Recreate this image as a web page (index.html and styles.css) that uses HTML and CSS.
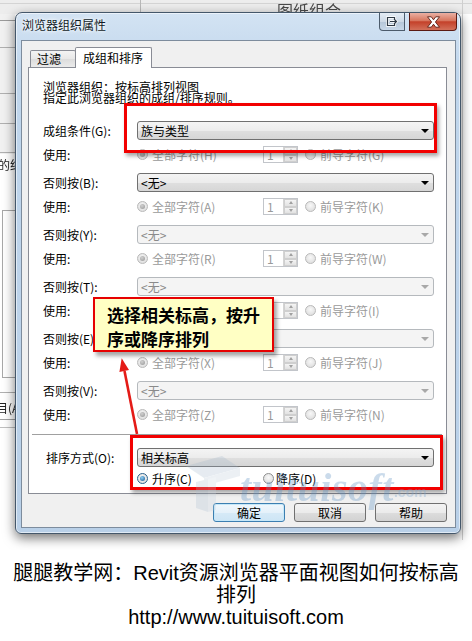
FILE: index.html
```html
<!DOCTYPE html>
<html lang="zh-CN">

<head>
    <meta charset="UTF-8" />
    <meta name="viewport" content="width=device-width, initial-scale=1" />
    <title>浏览器组织属性</title>
    <link rel="stylesheet" href="styles.css">
</head>

<body>

    <div class="scene">
        <!-- blurred Revit window behind the dialog -->
        <svg class="backdrop" width="472" height="550" viewBox="0 0 472 550">
            <rect x="0" y="0" width="472" height="14" fill="#ededed" />
            <line x1="0" y1="3.5" x2="472" y2="3.5" stroke="#d4d4d4" />
            <line x1="140.5" y1="0" x2="140.5" y2="14" stroke="#b8b8b8" />
            <text x="277" y="17" font-size="16" fill="#4a4a4a" font-family="Noto Sans CJK SC">图纸组合</text>
            <line x1="462.5" y1="0" x2="462.5" y2="540" stroke="#cfcfcf" />
            <rect x="0" y="14" width="15" height="140" fill="#f1f1f1" />
            <line x1="0" y1="20.5" x2="15" y2="20.5" stroke="#9a9a9a" />
            <line x1="0" y1="47.5" x2="15" y2="47.5" stroke="#b0b0b0" />
            <line x1="0" y1="93.5" x2="15" y2="93.5" stroke="#b0b0b0" />
            <line x1="0" y1="123.5" x2="15" y2="123.5" stroke="#b0b0b0" />
            <line x1="0" y1="152.5" x2="15" y2="152.5" stroke="#b0b0b0" />
            <text x="-2" y="170" font-size="12" fill="#222" font-family="Noto Sans CJK SC">的约</text>
            <rect x="2.5" y="210.5" width="20" height="167" fill="none" stroke="#a8a8a8" />
            <line x1="0" y1="392.5" x2="15" y2="392.5" stroke="#b0b0b0" />
            <text x="-4" y="413" font-size="12" fill="#222" font-family="Noto Sans CJK SC">目(A</text>
            <line x1="0" y1="419.5" x2="15" y2="419.5" stroke="#a0a0a0" />
            <line x1="0" y1="427.5" x2="15" y2="427.5" stroke="#c0c0c0" />
        </svg>

        <div class="dialog">
            <div class="titlebar">
                <span class="title">浏览器组织属性</span>
                <div class="caption-btns">
                    <span class="cbtn cbtn-dock">
                        <svg width="13" height="11" viewBox="0 0 13 11">
                            <path d="M8.5 3.5V1.5h-7v8h7V7.5" fill="none" stroke="#fff" stroke-width="2.6" />
                            <path d="M4 5.5h6M8 3l2.5 2.5L8 8" fill="none" stroke="#fff" stroke-width="2.6" />
                            <path d="M8.5 3.5V1.5h-7v8h7V7.5" fill="none" stroke="#2f3a46" stroke-width="1.2" />
                            <path d="M4 5.5h6M8 3l2.5 2.5L8 8" fill="none" stroke="#2f3a46" stroke-width="1.2" />
                        </svg>
                    </span>
                    <span class="cbtn cbtn-close">
                        <svg width="15" height="12" viewBox="0 0 15 12">
                            <path d="M1.5 0.8h3.8L7.5 3.8l2.2-3h3.8L9.4 6l4.1 5.2H9.7L7.5 8.2l-2.2 3H1.5L5.6 6z"
                                fill="#fff" stroke="#5b1c12" stroke-width="0.9" />
                        </svg>
                    </span>
                </div>
            </div>

            <div class="client">
                <div class="tabs">
                    <span class="tab">过滤</span>
                    <span class="tab active">成组和排序</span>
                </div>

                <div class="panel">
                    <p class="desc">浏览器组织：按标高排列视图<br>指定此浏览器组织的成组/排序规则。</p>

                    <div class="field"><span class="lbl">成组条件(G):</span><div class="select">族与类型</div></div>
                    <div class="use">
                        <span class="lbl">使用:</span>
                        <span class="opt opt-all"><i class="radio on"></i>全部字符(H)</span>
                        <span class="spin"><span class="spin-val">1</span><span class="spin-btns"><b class="up"></b><b class="down"></b></span></span>
                        <span class="opt opt-lead"><i class="radio"></i>前导字符(G)</span>
                    </div>

                    <div class="field"><span class="lbl">否则按(B):</span><div class="select">&lt;无&gt;</div></div>
                    <div class="use">
                        <span class="lbl">使用:</span>
                        <span class="opt opt-all"><i class="radio on"></i>全部字符(A)</span>
                        <span class="spin"><span class="spin-val">1</span><span class="spin-btns"><b class="up"></b><b class="down"></b></span></span>
                        <span class="opt opt-lead"><i class="radio"></i>前导字符(K)</span>
                    </div>

                    <div class="field"><span class="lbl">否则按(Y):</span><div class="select off">&lt;无&gt;</div></div>
                    <div class="use">
                        <span class="lbl">使用:</span>
                        <span class="opt opt-all"><i class="radio on"></i>全部字符(R)</span>
                        <span class="spin"><span class="spin-val">1</span><span class="spin-btns"><b class="up"></b><b class="down"></b></span></span>
                        <span class="opt opt-lead"><i class="radio"></i>前导字符(W)</span>
                    </div>

                    <div class="field"><span class="lbl">否则按(T):</span><div class="select off">&lt;无&gt;</div></div>
                    <div class="use">
                        <span class="lbl">使用:</span>
                        <span class="opt opt-all"><i class="radio on"></i>全部字符(S)</span>
                        <span class="spin"><span class="spin-val">1</span><span class="spin-btns"><b class="up"></b><b class="down"></b></span></span>
                        <span class="opt opt-lead"><i class="radio"></i>前导字符(I)</span>
                    </div>

                    <div class="field"><span class="lbl">否则按(E):</span><div class="select off">&lt;无&gt;</div></div>
                    <div class="use">
                        <span class="lbl">使用:</span>
                        <span class="opt opt-all"><i class="radio on"></i>全部字符(X)</span>
                        <span class="spin"><span class="spin-val">1</span><span class="spin-btns"><b class="up"></b><b class="down"></b></span></span>
                        <span class="opt opt-lead"><i class="radio"></i>前导字符(J)</span>
                    </div>

                    <div class="field"><span class="lbl">否则按(V):</span><div class="select off">&lt;无&gt;</div></div>
                    <div class="use">
                        <span class="lbl">使用:</span>
                        <span class="opt opt-all"><i class="radio on"></i>全部字符(Z)</span>
                        <span class="spin"><span class="spin-val">1</span><span class="spin-btns"><b class="up"></b><b class="down"></b></span></span>
                        <span class="opt opt-lead"><i class="radio"></i>前导字符(N)</span>
                    </div>

                    <hr class="sep">

                    <div class="field sort"><span class="lbl">排序方式(O):</span><div class="select">相关标高</div></div>
                    <div class="order">
                        <span class="opt"><i class="radio on"></i>升序(C)</span>
                        <span class="opt"><i class="radio"></i>降序(D)</span>
                    </div>

                    <!-- annotations drawn over the dialog -->
                    <div class="mark mark-group"></div>
                    <div class="mark mark-sort"></div>
                    <svg class="arrow" width="160" height="400" viewBox="0 0 160 400">
                        <line x1="108" y1="366" x2="95.5" y2="303" stroke="#e41b17" stroke-width="2.6" />
                        <polygon points="92.7,290.3 100,302 90.4,304" fill="#e41b17" />
                    </svg>
                    <div class="callout">选择相关标高，按升<br>序或降序排列</div>
                </div>

                <div class="buttons">
                    <button class="btn default">确定</button>
                    <button class="btn">取消</button>
                    <button class="btn">帮助</button>
                </div>
            </div>
        </div>

        <!-- site watermark -->
        <div class="watermark">
            <svg class="wm-logo" width="62" height="62" viewBox="0 0 62 62">
                <polygon points="4,14 40,4 58,16 22,26" fill="#9fb4c8" />
                <polygon points="22,26 58,16 58,24 22,34" fill="#b6c6d6" />
                <polygon points="14,30 26,27 26,60 14,56" fill="#a8bccf" />
                <polygon points="26,27 34,25 34,58 26,60" fill="#c2d0de" />
            </svg>
            <span class="wm-text">tuituisoft</span><span class="wm-com">.com</span>
        </div>
    </div>

    <div class="caption">
        <p>腿腿教学网：Revit资源浏览器平面视图如何按标高排列</p>
        <p>http://www.tuituisoft.com</p>
    </div>

</body>

</html>
```

FILE: styles.css
```css
* {
    box-sizing: border-box;
}

body {
    margin: 0;
    background: #fff;
    font-family: "Noto Sans CJK SC", "Liberation Sans", sans-serif;
    font-size: 12px;
    color: #000;
}

.scene {
    position: relative;
    height: 550px;
    padding-top: 12px;
    overflow: hidden;
}

.backdrop {
    position: absolute;
    left: 0;
    top: 0;
    filter: blur(0.4px);
}

/* aero window frame */
.dialog {
    position: relative;
    width: 446px;
    height: 522px;
    margin-left: 15px;
    border: 1px solid #44576a;
    border-radius: 7px 7px 6px 6px;
    background: linear-gradient(#d3e3f3, #c0d6ec 60px, #b9d0e8);
    box-shadow: inset 0 0 0 1px rgba(255, 255, 255, 0.55), 0 4px 12px rgba(0, 0, 0, 0.55);
}

.titlebar {
    display: flex;
    justify-content: space-between;
    height: 27px;
    padding: 0 3px 0 6px;
}

.title {
    line-height: 24px;
    color: #101a26;
    text-shadow: 0 0 5px #fff, 0 0 3px #fff;
}

.caption-btns {
    display: flex;
    gap: 4px;
    align-items: flex-start;
}

.cbtn {
    display: flex;
    align-items: center;
    justify-content: center;
    height: 18px;
    border: 1px solid #4c5b6b;
    border-top: none;
}

.cbtn-dock {
    width: 26px;
    border-radius: 0 0 0 4px;
    background: linear-gradient(#e4ecf4, #cdd9e6 50%, #b5c6d8 51%, #c8d8e9);
}

.cbtn-close {
    width: 48px;
    border-color: #5b1a12;
    border-radius: 0 0 4px 0;
    background: linear-gradient(#eab0a3, #d7765f 45%, #c4412a 52%, #d2705a);
}

.client {
    width: 435px;
    height: 488px;
    margin-left: 5px;
    border: 1px solid #7d8c9d;
    background: #f0f0f0;
    padding: 6px 8px 5px 6px;
}

/* tabs */
.tabs {
    display: flex;
    align-items: flex-end;
    height: 20px;
    padding-left: 2px;
}

.tab {
    width: 46px;
    height: 17px;
    padding-left: 6px;
    line-height: 16px;
    border: 1px solid #898c95;
    border-bottom: none;
    border-radius: 2px 2px 0 0;
    background: linear-gradient(#f4f4f4, #e8e8e8 50%, #dcdcdc 51%, #ebebeb);
}

.tab.active {
    position: relative;
    z-index: 1;
    width: 77px;
    height: 21px;
    margin-left: -1px;
    margin-bottom: -1px;
    padding-left: 7px;
    line-height: 19px;
    background: #fff;
}

.panel {
    position: relative;
    height: 427px;
    border: 1px solid #898c95;
    background: #fff;
    padding: 13px 12px 0 14px;
}

.desc {
    margin: 0 0 18px;
    line-height: 11px;
}

.field,
.use,
.order {
    display: flex;
    align-items: center;
    height: 19px;
}

.field {
    margin-bottom: 5px;
}

.use {
    margin-bottom: 9px;
}

.lbl {
    flex: none;
    width: 94px;
}

.select {
    flex: 1;
    height: 19px;
    display: flex;
    align-items: center;
    justify-content: space-between;
    padding: 0 4px 0 3px;
    border: 1px solid #707070;
    border-radius: 3px;
    background: linear-gradient(#f4f4f4, #ececec 50%, #dfdfdf 51%, #d6d6d6);
}

.select::after {
    content: "";
    border-left: 4px solid transparent;
    border-right: 4px solid transparent;
    border-top: 4px solid #000;
}

.select.off {
    color: #8a8a8a;
    border-color: #b5b9bd;
    background: #f4f4f4;
}

.select.off::after {
    border-top-color: #a8a8a8;
}

.opt {
    display: flex;
    align-items: center;
    gap: 4px;
    color: #9a9a9a;
    white-space: nowrap;
}

.opt-all {
    width: 126px;
}

.opt-lead {
    margin-left: 7px;
}

.radio {
    flex: none;
    width: 11px;
    height: 11px;
    display: flex;
    align-items: center;
    justify-content: center;
    border: 1px solid #b9b9b9;
    border-radius: 50%;
    background: radial-gradient(circle at 50% 40%, #f8f8f8, #d8d8d8);
}

.radio.on::after {
    content: "";
    width: 5px;
    height: 5px;
    border-radius: 50%;
    background: radial-gradient(circle at 40% 35%, #d0d0d0, #959595);
}

.spin {
    display: flex;
    width: 35px;
    height: 17px;
    border: 1px solid #c2c5ca;
    background: #fff;
}

.spin-val {
    flex: 1;
    padding-left: 3px;
    line-height: 15px;
    color: #9a9a9a;
}

.spin-btns {
    display: flex;
    flex-direction: column;
    width: 14px;
    border-left: 1px solid #d4d4d4;
}

.spin-btns b {
    flex: 1;
    display: flex;
    align-items: center;
    justify-content: center;
    background: linear-gradient(#f4f4f4, #e2e2e2);
    border: 1px solid #cfcfcf;
}

.spin-btns .up::after {
    content: "";
    border-left: 2.5px solid transparent;
    border-right: 2.5px solid transparent;
    border-bottom: 3px solid #a0a0a0;
}

.spin-btns .down::after {
    content: "";
    border-left: 2.5px solid transparent;
    border-right: 2.5px solid transparent;
    border-top: 3px solid #a0a0a0;
}

.sep {
    margin: 10px -8px 13px -11px;
    border: none;
    border-top: 1px solid #a0a0a0;
}

.field.sort {
    margin-bottom: 2px;
}

.sort .lbl {
    padding-left: 3px;
}

.order {
    padding-left: 94px;
}

.order .opt {
    color: #000;
}

.order .opt:first-child {
    width: 126px;
}

.order .opt + .opt {
    gap: 2px;
}

.order .radio {
    border-color: #8e8f8f;
}

.order .radio.on {
    border-color: #2c628b;
}

.order .radio.on::after {
    background: radial-gradient(circle at 40% 35%, #8fd0f5, #17568f);
}

/* annotations */
.mark {
    position: absolute;
    border: 3px solid #f20000;
    box-shadow: 2px 3px 4px rgba(0, 0, 0, 0.35);
}

.mark-group {
    left: 95px;
    top: 35px;
    width: 313px;
    height: 50px;
}

.mark-sort {
    left: 101px;
    top: 367px;
    width: 313px;
    height: 55px;
}

.arrow {
    position: absolute;
    left: 0;
    top: 0;
}

.callout {
    position: absolute;
    left: 64px;
    top: 229px;
    width: 181px;
    height: 55px;
    padding: 4px 0 0 12px;
    border: 2px solid #e60000;
    background: #ffffc4;
    box-shadow: 3px 4px 4px rgba(0, 0, 0, 0.35);
    font-size: 17px;
    font-weight: bold;
    line-height: 24px;
    white-space: nowrap;
}

/* dialog buttons */
.buttons {
    display: flex;
    justify-content: flex-end;
    gap: 9px;
    margin-top: 9px;
}

.btn {
    width: 72px;
    height: 19px;
    padding: 0;
    font: inherit;
    color: #000;
    border: 1px solid #707070;
    border-radius: 3px;
    background: linear-gradient(#f3f3f3, #ebebeb 50%, #dddddd 51%, #d2d2d2);
}

.btn.default {
    border-color: #3c7fb1;
    box-shadow: inset 0 0 0 1px #c6e8f9;
    background: linear-gradient(#f0f7fc, #e5f1fa 50%, #d6eaf7 51%, #cde5f5);
}

/* watermark */
.watermark {
    position: absolute;
    left: 182px;
    top: 452px;
    display: flex;
    align-items: flex-end;
    pointer-events: none;
    opacity: 0.32;
}

.wm-logo {
    opacity: 0.8;
}

.wm-text {
    margin-left: -4px;
    margin-bottom: 6px;
    font-family: "Liberation Serif", serif;
    font-size: 40px;
    font-style: italic;
    font-weight: bold;
    line-height: 40px;
    letter-spacing: 0.5px;
    color: #5f93c4;
}

.wm-com {
    margin-bottom: 14px;
    font-family: "Liberation Sans", sans-serif;
    font-size: 14px;
    font-weight: bold;
    color: #7fa8d0;
}

.caption {
    padding: 12px 8px 0;
    text-align: center;
    font-family: "Liberation Sans", "Noto Sans CJK SC", sans-serif;
    font-size: 20px;
    line-height: 22px;
}

.caption p {
    margin: 0;
}
```
